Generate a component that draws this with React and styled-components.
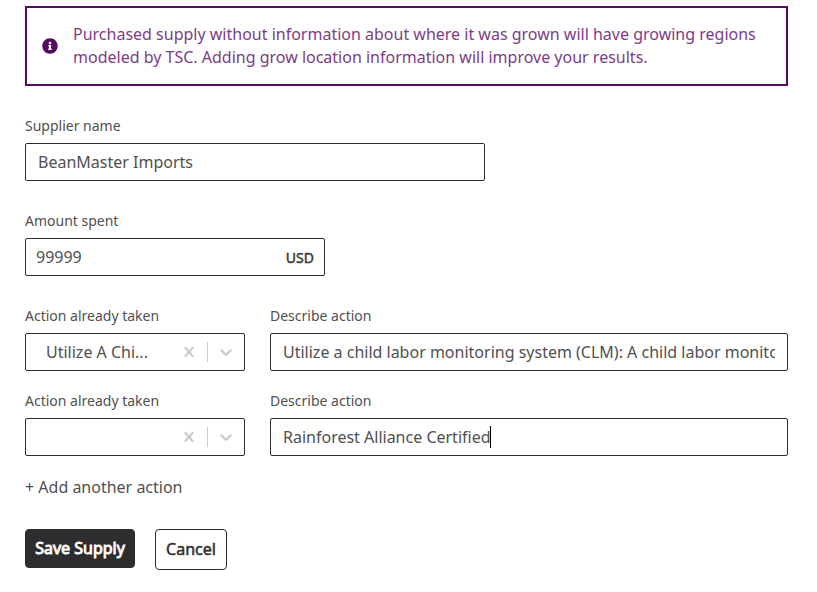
import React from "react";
import styled, { createGlobalStyle } from "styled-components";
import { FaInfoCircle } from "react-icons/fa";

const Global = createGlobalStyle`
  * { box-sizing: border-box; }
  body {
    margin: 0;
    background: #fff;
    color: #505050;
    font-family: "Noto Sans", sans-serif;
    font-size: 16px;
  }
`;

const Page = styled.main`
  width: 817px;
  height: 592px;
  padding: 6px 29px 0 25px;
  overflow: hidden;
`;

const Notice = styled.section`
  display: flex;
  align-items: center;
  height: 80px;
  padding: 0 15px;
  border: 2px solid #560b63;
  color: #7c3c87;
  line-height: 23px;
`;

const NoticeIcon = styled(FaInfoCircle)`
  flex: none;
  width: 16px;
  height: 16px;
  margin-right: 15px;
  color: #560b63;
`;

const NoticeText = styled.p`
  margin: 0;
`;

const Form = styled.form`
  display: flex;
  flex-direction: column;
  padding-top: 30px;
`;

const Field = styled.div`
  width: ${(p) => p.$width}px;
  margin-bottom: ${(p) => p.$gap || 0}px;
`;

const Label = styled.div`
  height: 27px;
  font-size: 14px;
  line-height: 20px;
`;

const Control = styled.div`
  display: flex;
  align-items: center;
  height: 38px;
  padding: 0 ${(p) => p.$pad}px;
  border: 1px solid #2d2d2f;
  border-radius: 2px;
`;

const Value = styled.span`
  flex: ${(p) => (p.$hug ? "none" : "1")};
  min-width: 0;
  overflow: hidden;
  white-space: nowrap;
  line-height: 22px;
`;

const Currency = styled.span`
  font-size: 14px;
  font-weight: 400;
  -webkit-text-stroke: 0.5px currentColor;
  line-height: 20px;
  padding-top: 1px;
  color: #3a3a3c;
`;

const Caret = styled.span`
  width: 1px;
  height: 22px;
  margin-left: -1px;
  background: #000;
`;

const SelectControl = styled(Control)`
  padding: 0 8px 0 20px;
`;

const Separator = styled.span`
  width: 1px;
  height: 20px;
  margin: 0 8px;
  background: #ccc;
`;

const SelectIcon = styled.svg`
  flex: none;
  width: 20px;
  height: 20px;
  fill: #ccc;
`;

const ActionRow = styled.div`
  display: flex;
  gap: 25px;
  margin-bottom: 20px;
`;

const AddAction = styled.div`
  line-height: 22px;
`;

const Buttons = styled.div`
  display: flex;
  align-items: flex-start;
  gap: 20px;
  margin-top: 31px;
`;

const Button = styled.button`
  width: ${(p) => p.$width}px;
  height: ${(p) => (p.$primary ? 39 : 41)}px;
  padding: 0 0 ${(p) => (p.$primary ? 1 : 2)}px;
  border: 1px solid #2d2d2f;
  border-radius: 4px;
  background: ${(p) => (p.$primary ? "#2d2d2f" : "#fff")};
  color: ${(p) => (p.$primary ? "#fff" : "#2d2d2f")};
  font: 400 16px/22px "Noto Sans", sans-serif;
  -webkit-text-stroke: ${(p) => (p.$primary ? "0.9px" : "0.5px")} currentColor;
  white-space: nowrap;
`;

const CLEAR =
  "M14.348 14.849c-0.469 0.469-1.229 0.469-1.697 0l-2.651-3.030-2.651 3.029c-0.469 0.469-1.229 0.469-1.697 0-0.469-0.469-0.469-1.229 0-1.697l2.758-3.15-2.759-3.152c-0.469-0.469-0.469-1.228 0-1.697s1.228-0.469 1.697 0l2.652 3.031 2.651-3.031c0.469-0.469 1.228-0.469 1.697 0s0.469 1.229 0 1.697l-2.758 3.152 2.758 3.15c0.469 0.469 0.469 1.229 0 1.698z";
const CHEVRON =
  "M4.516 7.548c0.436-0.446 1.043-0.481 1.576 0l3.908 3.747 3.908-3.747c0.533-0.481 1.141-0.446 1.574 0 0.436 0.445 0.408 1.197 0 1.615-0.406 0.418-4.695 4.502-4.695 4.502-0.217 0.223-0.502 0.335-0.787 0.335s-0.57-0.112-0.789-0.335c0 0-4.287-4.084-4.695-4.502s-0.436-1.17 0-1.615z";

function Action({ action, description, focused }) {
  return (
    <ActionRow>
      <Field $width={220}>
        <Label>Action already taken</Label>
        <SelectControl>
          <Value>{action}</Value>
          <SelectIcon viewBox="0 0 20 20"><path d={CLEAR} /></SelectIcon>
          <Separator />
          <SelectIcon viewBox="0 0 20 20"><path d={CHEVRON} /></SelectIcon>
        </SelectControl>
      </Field>
      <Field $width={518}>
        <Label>Describe action</Label>
        <Control $pad={12}>
          <Value $hug={focused}>{description}</Value>
          {focused && <Caret />}
        </Control>
      </Field>
    </ActionRow>
  );
}

export default function App() {
  return (
    <Page>
      <Global />
      <Notice>
        <NoticeIcon />
        <NoticeText>
          Purchased supply without information about where it was grown will have growing regions
          modeled by TSC. Adding grow location information will improve your results.
        </NoticeText>
      </Notice>
      <Form>
        <Field $width={460} $gap={30}>
          <Label>Supplier name</Label>
          <Control $pad={12}><Value>BeanMaster Imports</Value></Control>
        </Field>
        <Field $width={300} $gap={30}>
          <Label>Amount spent</Label>
          <Control $pad={10}>
            <Value>99999</Value>
            <Currency>USD</Currency>
          </Control>
        </Field>
        <Action
          action="Utilize A Chi..."
          description="Utilize a child labor monitoring system (CLM): A child labor monitoring system"
        />
        <Action description="Rainforest Alliance Certified" focused />
        <AddAction>+ Add another action</AddAction>
        <Buttons>
          <Button type="button" $primary $width={110}>Save Supply</Button>
          <Button type="button" $width={72}>Cancel</Button>
        </Buttons>
      </Form>
    </Page>
  );
}
